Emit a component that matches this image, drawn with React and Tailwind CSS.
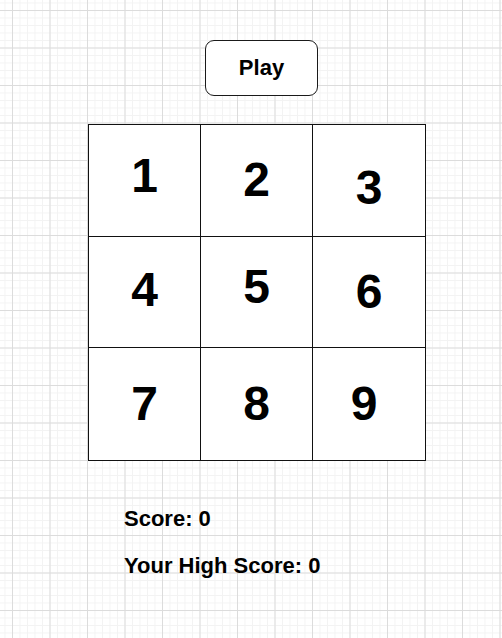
import React from 'react';

const cells = [
  { n: 1, shift: 'pb-[8px]' },
  { n: 2, shift: 'pb-[0px]' },
  { n: 3, shift: 'pt-[16px]' },
  { n: 4, shift: 'pb-[4px]' },
  { n: 5, shift: 'pb-[10px]' },
  { n: 6, shift: 'pt-[0px]' },
  { n: 7, shift: 'pt-[0px]' },
  { n: 8, shift: 'pt-[0px]' },
  { n: 9, shift: 'pr-[10px]' },
];

export default function App() {
  return (
    <div
      className="w-[502px] h-[638px] overflow-hidden bg-white font-['Liberation_Sans',Arial,sans-serif] text-black
        bg-[image:linear-gradient(to_right,#dcdcdc_1px,transparent_1px),linear-gradient(to_bottom,#dcdcdc_1px,transparent_1px),linear-gradient(to_right,#f3f3f3_1px,transparent_1px),linear-gradient(to_bottom,#f3f3f3_1px,transparent_1px)]
        bg-[length:37.5px_37.5px,37.5px_37.5px,7.5px_7.5px,7.5px_7.5px]
        bg-[position:12px_10px,12px_10px,12px_10px,12px_10px]"
    >
      <div className="flex flex-col pt-[40px]">
        <button className="ml-[205px] w-[113px] h-[56px] rounded-[9px] border border-[#1a1a1a] bg-white text-[22px] font-bold leading-none">
          Play
        </button>

        <div className="ml-[88px] mt-[28px] w-[338px] h-[337px] grid grid-cols-3 grid-rows-3 border border-[#111] bg-white">
          {cells.map((c, i) => (
            <div
              key={c.n}
              className={`flex items-center justify-center text-[48px] font-bold leading-none border-[#111] ${c.shift} ${
                i % 3 !== 2 ? 'border-r' : ''
              } ${i < 6 ? 'border-b' : ''}`}
            >
              {c.n}
            </div>
          ))}
        </div>

        <div className="ml-[124px] mt-[45px] flex flex-col gap-[22px] text-[22px] font-bold leading-[25px]">
          <p>Score: 0</p>
          <p>Your High Score: 0</p>
        </div>
      </div>
    </div>
  );
}
